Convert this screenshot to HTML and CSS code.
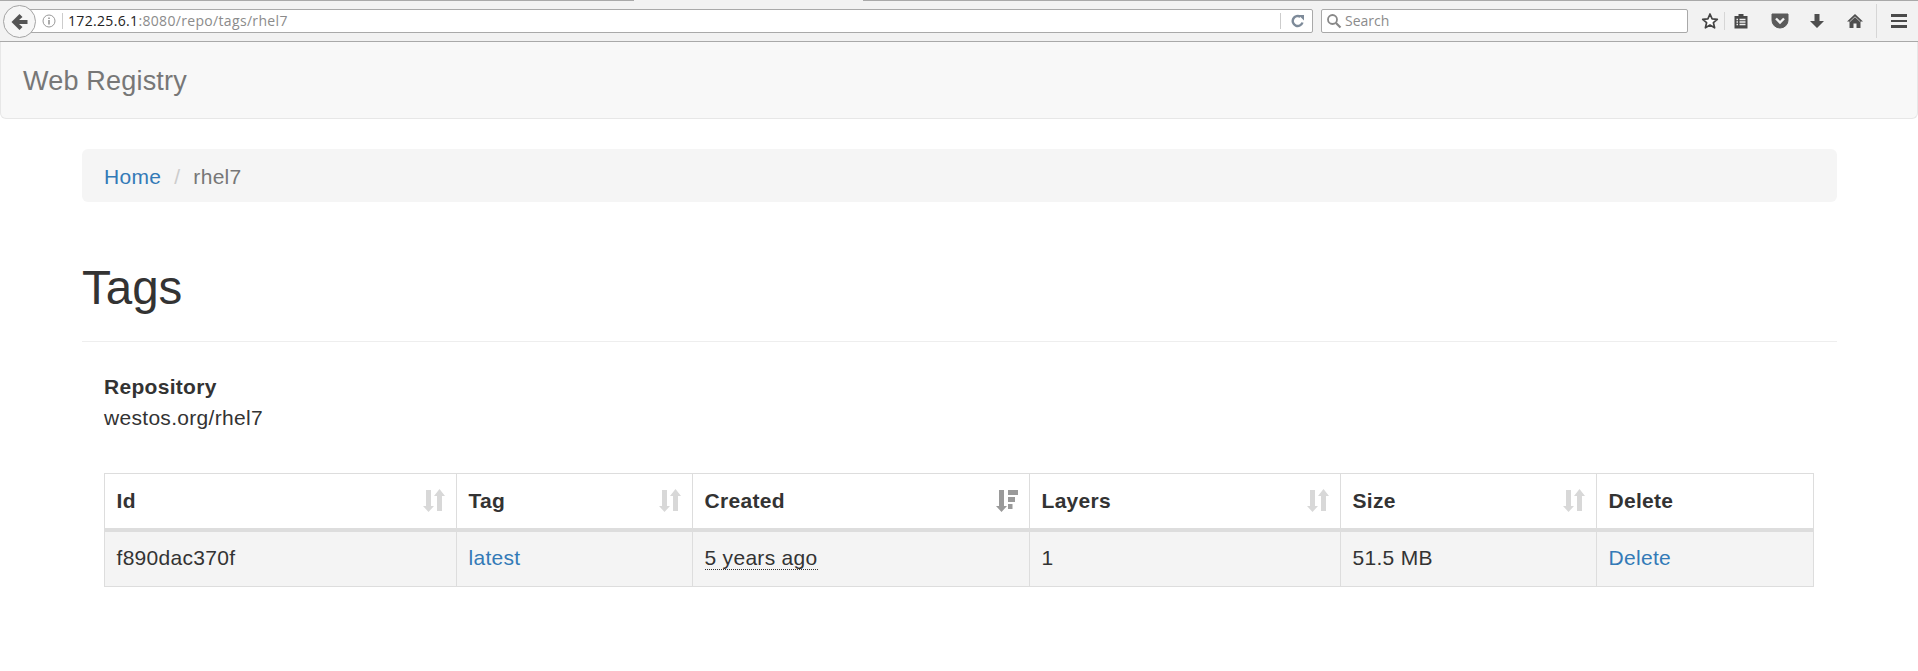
FILE: index.html
```html
<!DOCTYPE html>
<html lang="en">
<head>
<meta charset="utf-8">
<title>Web Registry</title>
<link rel="stylesheet" href="styles.css">
</head>
<body>
<div class="toolbar">
  <span class="tab-gap"></span>
  <div class="back">
    <svg width="20" height="18" viewBox="0 0 20 18"><path d="M9.500 1 1.500 9l8 8 3-3L9 11h8.500V7H9l3.500-3z" fill="#555"/></svg>
  </div>
  <div class="urlbar">
    <svg class="info" width="14" height="14" viewBox="0 0 14 14"><circle cx="7" cy="7" r="6" fill="none" stroke="#999" stroke-width="1"/><rect x="6.300" y="6" width="1.400" height="4.500" fill="#888"/><rect x="6.300" y="3.500" width="1.400" height="1.500" fill="#888"/></svg>
    <span class="sep"></span>
    <span class="url"><span class="host">172.25.6.1</span>:8080/repo/tags/rhel7</span>
    <span class="sep sep-end"></span>
    <svg class="reload" width="14" height="14" viewBox="0 0 14 14"><path d="M11.500 8.500A5 5 0 1 1 9.500 2.800" fill="none" stroke="#7d8a99" stroke-width="2.400"/><path d="M7.500 1h5.500v5.500z" fill="#7d8a99"/></svg>
  </div>
  <div class="searchbar">
    <svg width="16" height="16" viewBox="0 0 16 16"><circle cx="6.500" cy="6.500" r="4.500" fill="none" stroke="#888" stroke-width="1.800"/><path d="M10 10l4.500 4.500" stroke="#888" stroke-width="2.200"/></svg>
    <span class="search-text">Search</span>
  </div>
  <div class="tools">
    <svg class="t-star" width="18" height="18" viewBox="0 0 18 18"><path d="M9 2l2.100 4.800 5.200.5-3.900 3.400 1.200 5.100L9 13.100l-4.600 2.700 1.200-5.100-3.900-3.400 5.200-.5z" fill="#fff" stroke="#444" stroke-width="1.700" stroke-linejoin="round"/></svg>
    <span class="tool-sep"></span>
    <svg class="t-clip" width="16" height="16" viewBox="0 0 16 16"><path d="M1.500 3H5.500V1h5V3h4v12.500H1.500z" fill="#484848"/><path d="M3.500 6.500h1.500M6.500 6.500h6M3.500 9h1.500M6.500 9h6M3.500 11.500h1.500M6.500 11.500h6" stroke="#eee" stroke-width="1.300"/></svg>
    <svg class="t-pocket" width="18" height="16" viewBox="0 0 18 16"><path d="M1 1h16v6.500a8 7.500 0 0 1-16 0z" fill="#5a5a5a" stroke="#5a5a5a" stroke-linejoin="round"/><path d="M5 5.500l4 4 4-4" fill="none" stroke="#f2f2f2" stroke-width="2.400"/></svg>
    <svg class="t-down" width="16" height="16" viewBox="0 0 16 16"><path d="M5.500 1h5v7H15l-7 7-7-7h4.500z" fill="#4f4f4f"/></svg>
    <svg class="t-home" width="18" height="16" viewBox="0 0 18 16"><path d="M9 1 1 8.500h2.500V15h4v-4.500h3V15h4V8.500H17z" fill="#4f4f4f"/><path d="M4 8.500 9 3.800l5 4.700" fill="none" stroke="#ddd" stroke-width=".8"/></svg>
    <span class="tool-sep tool-sep-tall"></span>
    <span class="menu"><i></i><i></i><i></i></span>
  </div>
</div>

<nav class="navbar"><a class="brand">Web Registry</a></nav>

<main class="container">
  <ol class="breadcrumb">
    <li><a href="#">Home</a></li>
    <li class="divider">/</li>
    <li class="current">rhel7</li>
  </ol>
  <h1 class="page-title">Tags</h1>
  <dl class="repo">
    <dt>Repository</dt>
    <dd>westos.org/rhel7</dd>
  </dl>
  <table class="tags">
    <thead>
      <tr>
        <th class="c-id"><span class="th-in">Id<svg class="sort" width="22" height="24" viewBox="0 0 22 24"><path d="M3 1h5v16h3l-5.500 6L0 17h3zM16.500 0l5.500 7h-3v15h-5V7h-3z"/></svg></span></th>
        <th class="c-tag"><span class="th-in">Tag<svg class="sort" width="22" height="24" viewBox="0 0 22 24"><path d="M3 1h5v16h3l-5.500 6L0 17h3zM16.500 0l5.500 7h-3v15h-5V7h-3z"/></svg></span></th>
        <th class="c-created"><span class="th-in">Created<svg class="sort sort-on" width="22" height="24" viewBox="0 0 22 24"><path d="M3 1h5v16h3l-5.500 6L0 17h3zM12 1h10v5H12zM12 8h7v5h-7zM12 15h4.500v5H12z"/></svg></span></th>
        <th class="c-layers"><span class="th-in">Layers<svg class="sort" width="22" height="24" viewBox="0 0 22 24"><path d="M3 1h5v16h3l-5.500 6L0 17h3zM16.500 0l5.500 7h-3v15h-5V7h-3z"/></svg></span></th>
        <th class="c-size"><span class="th-in">Size<svg class="sort" width="22" height="24" viewBox="0 0 22 24"><path d="M3 1h5v16h3l-5.500 6L0 17h3zM16.500 0l5.500 7h-3v15h-5V7h-3z"/></svg></span></th>
        <th class="c-delete">Delete</th>
      </tr>
    </thead>
    <tbody>
      <tr>
        <td>f890dac370f</td>
        <td><a href="#">latest</a></td>
        <td><abbr title="5 years ago">5 years ago</abbr></td>
        <td>1</td>
        <td>51.5 MB</td>
        <td><a href="#">Delete</a></td>
      </tr>
    </tbody>
  </table>
</main>
</body>
</html>
```
FILE: styles.css
```css
* { box-sizing: border-box; }
html, body { margin: 0; padding: 0; }
body {
  font-family: "Liberation Sans", Arial, sans-serif;
  font-size: 21px;
  line-height: 28px;
  letter-spacing: .3px;
  color: #333;
  background: #fff;
}
a { color: #337ab7; text-decoration: none; }

.toolbar {
  position: relative;
  display: flex;
  align-items: center;
  height: 42px;
  padding: 0 0 0 20px;
  background: #f2f2f2;
  border-top: 1px solid #a9a9a9;
  border-bottom: 1px solid #a9a9a9;
  letter-spacing: 0;
}
.tab-gap {
  position: absolute;
  left: 634px;
  top: -1px;
  width: 229px;
  height: 1px;
  background: #f2f2f2;
}
.back {
  position: absolute;
  left: 3px;
  top: 4px;
  width: 33px;
  height: 33px;
  border: 1px solid #a4a4a4;
  border-radius: 50%;
  background: #f6f6f6;
  display: flex;
  align-items: center;
  justify-content: center;
  z-index: 1;
}
.urlbar {
  display: flex;
  align-items: center;
  width: 1293px;
  height: 24px;
  margin-right: 8px;
  padding: 0 6px 0 21px;
  background: #fff;
  border: 1px solid #a9a9a9;
  border-radius: 2px;
}
.info { margin-right: 6px; }
.sep { width: 1px; height: 16px; background: #ccc; margin-right: 5px; flex: none; }
.sep-end { margin-right: 10px; }
.url { flex: 1; font-family: "Open Sans", "DejaVu Sans", sans-serif; font-size: 14px; line-height: 22px; letter-spacing: .33px; color: #8b8b8b; }
.host { color: #222; }
.reload { flex: none; margin-right: 1px; }
.searchbar {
  display: flex;
  align-items: center;
  gap: 3px;
  width: 367px;
  height: 24px;
  padding: 0 4px;
  background: #fff;
  border: 1px solid #a9a9a9;
  border-radius: 2px;
}
.search-text { font-family: "Open Sans", "DejaVu Sans", sans-serif; font-size: 14px; line-height: 22px; color: #8b8b8b; }
.tools { display: flex; align-items: center; flex: 1; padding-left: 13px; }
.t-star { margin-right: 5px; }
.tool-sep { width: 1px; height: 18px; background: #d6d6d6; margin-right: 8px; }
.t-clip { margin-right: 22px; }
.t-pocket { margin-right: 20px; }
.t-down { margin-right: 21px; }
.t-home { margin-right: 12px; }
.tool-sep-tall { height: 34px; margin-right: 14px; }
.menu { display: flex; flex-direction: column; gap: 3px; width: 16px; }
.menu i { display: block; height: 2.500px; background: #4a4a4a; }

.navbar {
  height: 77px;
  margin-bottom: 30px;
  padding: 2px 22px 0;
  display: flex;
  align-items: center;
  background: #f8f8f8;
  border: 1px solid #e7e7e7;
  border-top: 0;
  border-radius: 0 0 6px 6px;
}
.brand { font-size: 27px; line-height: 28px; letter-spacing: .2px; color: #777; }

.container { margin: 0 81px 0 82px; }
.breadcrumb {
  display: flex;
  gap: 13px;
  list-style: none;
  margin: 0 0 29px;
  padding: 14px 22px 11px;
  height: 53px;
  background: #f5f5f5;
  border-radius: 6px;
}
.divider { color: #ccc; }
.current { color: #777; }
.page-title {
  margin: 0 0 29px;
  padding: 29px 0 25px;
  font-size: 47.500px;
  line-height: 56px;
  font-weight: 400;
  letter-spacing: 0;
  border-bottom: 1px solid #eee;
}
.repo { margin: 0 0 40px 22px; }
.repo dt { font-weight: 700; line-height: 31px; }
.repo dd { margin: 0; line-height: 31px; }

.tags {
  table-layout: fixed;
  border-collapse: collapse;
  width: 1709px;
  margin-left: 22px;
}
.c-id { width: 352px; }
.c-tag { width: 236px; }
.c-created { width: 337px; }
.c-layers { width: 311px; }
.c-size { width: 256px; }
.c-delete { width: 217px; }
.tags th, .tags td { border: 1px solid #ddd; padding: 0 11.500px; text-align: left; }
.tags th { height: 56px; padding-top: 1px; border-bottom: 4px solid #ddd; font-weight: 700; }
.tags td { height: 57px; padding-bottom: 1px; background: #f4f4f4; }
.th-in { display: flex; align-items: center; justify-content: space-between; }
.sort { fill: #d8d8d8; flex: none; }
.sort-on { fill: #9a9a9a; }
abbr { text-decoration: none; border-bottom: 1px dotted #333; }
```
